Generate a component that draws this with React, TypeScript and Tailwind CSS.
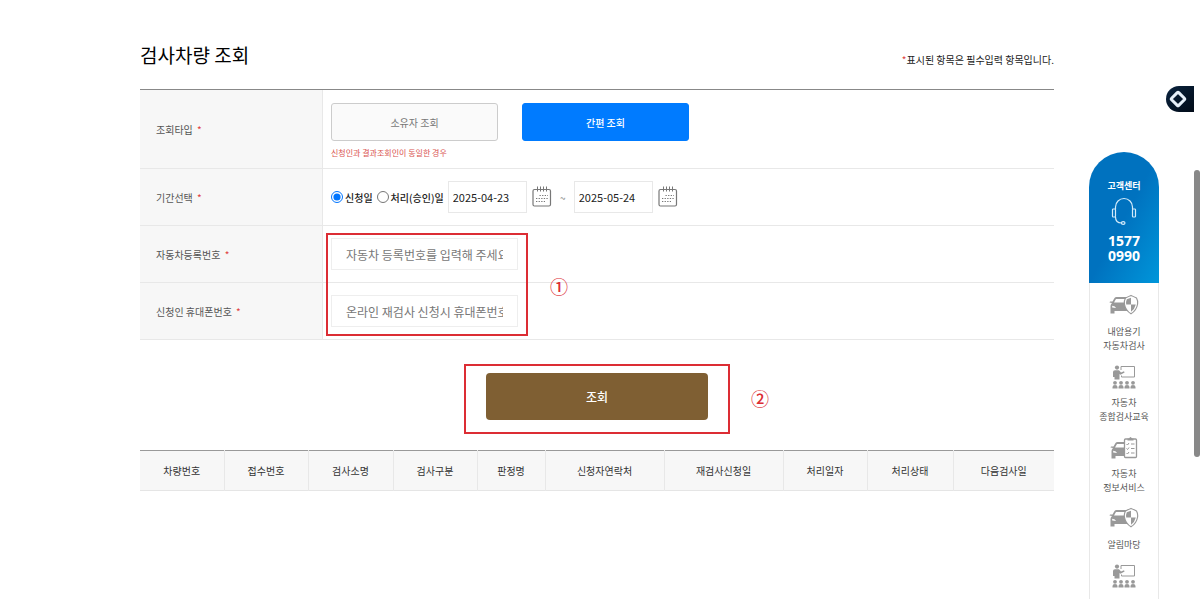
import { useState } from 'react'
import type { ReactNode } from 'react'

const columns = [
  { label: '차량번호', width: 'w-[84px]' },
  { label: '접수번호', width: 'w-[84px]' },
  { label: '검사소명', width: 'w-[85px]' },
  { label: '검사구분', width: 'w-[84px]' },
  { label: '판정명', width: 'w-[68px]' },
  { label: '신청자연락처', width: 'w-[119px]' },
  { label: '재검사신청일', width: 'w-[119px]' },
  { label: '처리일자', width: 'w-[84px]' },
  { label: '처리상태', width: 'w-[86px]' },
  { label: '다음검사일', width: 'w-[101px]' },
]

function CalendarIcon() {
  return (
    <svg width="20" height="22" viewBox="0 0 20 22" fill="none" stroke="#777">
      <rect x="1" y="3.5" width="17.5" height="16.5" rx="1.5" strokeWidth="1.2" />
      <path d="M5.500 0.500v5M8.500 0.500v5M11.500 0.500v5M14.500 0.500v5" />
      <path
        d="M7.500 9.500h8.500M4 12.500h12M4 15.500h9"
        strokeWidth="1.2"
        strokeDasharray="1.3 1.3"
      />
    </svg>
  )
}

function HeadsetIcon() {
  return (
    <svg width="26" height="28" viewBox="0 0 26 28" fill="none" stroke="#d3ebfa" strokeWidth="1.2">
      <path d="M4.5 12V10a8.500 8.500 0 0 1 17 0V12" />
      <rect x="1.500" y="12" width="3" height="8" rx="0.800" />
      <rect x="21.500" y="12" width="3" height="8" rx="0.800" />
      <path d="M4.500 20c0 4 2.500 6 6 6" />
      <ellipse cx="12.200" cy="26" rx="1.800" ry="1.300" />
    </svg>
  )
}

function CarShape() {
  return (
    <path
      fillRule="evenodd"
      d="M0.500 8.500L1 7.500H3.500L5.500 4Q6.200 3 7.500 3H18V17H5.500V19.500H1.500V12Q1.500 10.500 3 9ZM7 5L5 8.500H18V5ZM3.200 11.800V13.500L7 14Q6.500 12 3.200 11.800Z"
    />
  )
}

function CarShieldIcon() {
  return (
    <svg width="30" height="24" viewBox="0 0 30 24" fill="#999">
      <CarShape />
      <path
        d="M22 1.500Q24.500 2.500 27.500 4Q29 6.500 28.600 10Q27.500 16.500 22 19.800Q16.500 16.500 15.400 10Q15 6.500 16.500 4Q19.500 2.500 22 1.500Z"
        fill="#fff"
        stroke="#999"
        strokeWidth="1.200"
      />
      <path d="M22 3.800V10.500H17.200Q16.800 7.500 17.800 5.300Q20 4.300 22 3.800ZM22 10.500H26.800Q25.800 15 22 17.800Z" />
    </svg>
  )
}

function LectureIcon() {
  return (
    <svg width="24" height="24" viewBox="0 0 24 24" fill="#999">
      <circle cx="5" cy="2.600" r="2.100" />
      <path d="M1 7Q1 5.200 3 5.200H7L9 7.500 12 6.200 12.600 7.500 8.500 9.800 7.500 9V14.500H2.500V12H1Z" />
      <path d="M9 5V1.500H22.500V12H9.500V10.500" fill="none" stroke="#999" />
      {[3, 9, 15, 21].map((x) => (
        <g key={x}>
          <circle cx={x} cy="17.800" r="1.900" />
          <path d={`M${x - 2.5} 23.500v-1.500q0-2 2.500-2t2.500 2v1.500z`} />
        </g>
      ))}
    </svg>
  )
}

function CarChecklistIcon() {
  return (
    <svg width="28" height="24" viewBox="0 0 28 24" fill="#999">
      <g transform="translate(0 3)">
        <CarShape />
      </g>
      <rect x="14.500" y="3" width="12" height="18.500" rx="1" fill="#fff" stroke="#999" strokeWidth="1.300" />
      <path d="M17.500 4.500V2.500H19Q20.500 -0.500 22 2.500H23.500V4.500Z" />
      <path
        d="M16.500 8l1 1 1.500-2M16.500 12.500l1 1 1.500-2M16.500 17l1 1 1.500-2M21 8h3.500M21 12.500h3.500M21 17h3.500"
        fill="none"
        stroke="#999"
      />
    </svg>
  )
}

const quickLinks = [
  { icon: <CarShieldIcon />, lines: ['내압용기', '자동차검사'] },
  { icon: <LectureIcon />, lines: ['자동차', '종합검사교육'] },
  { icon: <CarChecklistIcon />, lines: ['자동차', '정보서비스'] },
  { icon: <CarShieldIcon />, lines: ['알림마당'] },
  { icon: <LectureIcon />, lines: [] },
]

function Row({
  label,
  htmlFor,
  className,
  children,
}: {
  label: string
  htmlFor?: string
  className: string
  children: ReactNode
}) {
  return (
    <div className={`flex border-b border-[#e8e8e8] ${className}`}>
      <div className="flex w-[183px] items-center border-r border-[#e8e8e8] bg-[#f7f7f7] pl-4 text-[10px] text-[#555]">
        <label htmlFor={htmlFor}>
          {label} <span className="ml-0.5 text-[#e04040]">*</span>
        </label>
      </div>
      <div className="flex flex-1 flex-col justify-center pl-2">{children}</div>
    </div>
  )
}

function SideMenu() {
  return (
    <aside className="mt-[152px] flex w-[70px] shrink-0 flex-col">
      <div className="flex h-[131px] flex-col items-center rounded-t-full bg-linear-to-br from-[#0072bf] from-50% to-[#0096da] pt-[27px] font-bold text-white">
        <p className="text-[9px] leading-[14px]">고객센터</p>
        <div className="mt-1">
          <HeadsetIcon />
        </div>
        <p className="mt-2 text-center font-['Noto_Sans',sans-serif] text-[14px] leading-[15px]">
          <span className="block">1577</span>
          <span className="block">0990</span>
        </p>
      </div>
      <nav className="flex flex-1 flex-col gap-3 border-x border-[#e8e8e8] bg-white pt-[11px]">
        {quickLinks.map((item, index) => (
          <a
            key={index}
            href="#"
            className="flex flex-col items-center gap-[7px] text-center text-[9px] leading-[14px] text-[#555]"
          >
            {item.icon}
            {item.lines.length > 0 && (
              <span>
                {item.lines.map((line) => (
                  <span key={line} className="block">
                    {line}
                  </span>
                ))}
              </span>
            )}
          </a>
        ))}
      </nav>
    </aside>
  )
}

export default function App() {
  const [searchType, setSearchType] = useState('simple')
  const [dateType, setDateType] = useState('apply')

  const typeButton = 'h-[38px] w-[167px] rounded-[3px] border text-[10px]'
  const typeOn = 'border-[#007bff] bg-[#007bff] font-medium text-white'
  const typeOff = 'border-[#ccc] bg-[#fafafa] text-[#777]'
  const dateInput = 'h-8 w-[79px] border border-[#e8e8e8] px-1 text-[11px] text-[#222]'
  const textInput =
    'h-8 w-[187px] border border-[#eee] px-[14px] text-[12px] placeholder:text-[#777]'

  return (
    <div className="flex h-screen overflow-hidden bg-white pr-[41px] font-['Noto_Sans_CJK_KR',sans-serif] text-[#222]">
      <main className="mr-[35px] ml-[140px] flex-1 pt-10">
        <div className="mb-[19px] flex items-end justify-between">
          <h1 className="text-[19px] leading-[30px] text-black">검사차량 조회</h1>
          <p className="text-[10px] leading-5">
            <span className="text-[#e04040]">*</span>표시된 항목은 필수입력 항목입니다.
          </p>
        </div>

        <form onSubmit={(e) => e.preventDefault()}>
          <div className="border-t border-[#888]">
            <Row label="조회타입" className="h-[79px]">
              <div className="flex gap-6 pt-1.5">
                <button
                  type="button"
                  className={`${typeButton} ${searchType === 'owner' ? typeOn : typeOff}`}
                  onClick={() => setSearchType('owner')}
                >
                  소유자 조회
                </button>
                <button
                  type="button"
                  className={`${typeButton} ${searchType === 'simple' ? typeOn : typeOff}`}
                  onClick={() => setSearchType('simple')}
                >
                  간편 조회
                </button>
              </div>
              <p className="mt-1 text-[8px] leading-4 text-[#d9534f]">
                신청인과 결과조회인이 동일한 경우
              </p>
            </Row>

            <Row label="기간선택" className="h-[57px]">
              <div className="flex items-center text-[10px]">
                <label className="mr-1 flex items-center gap-0.5 font-medium">
                  <input
                    type="radio"
                    name="dateType"
                    className="size-3"
                    checked={dateType === 'apply'}
                    onChange={() => setDateType('apply')}
                  />
                  신청일
                </label>
                <label className="mr-1 flex items-center gap-0.5 font-medium">
                  <input
                    type="radio"
                    name="dateType"
                    className="size-3"
                    checked={dateType === 'approve'}
                    onChange={() => setDateType('approve')}
                  />
                  처리(승인)일
                </label>
                <input aria-label="시작일" className={dateInput} defaultValue="2025-04-23" />
                <button type="button" aria-label="시작일 달력" className="ml-[5px]">
                  <CalendarIcon />
                </button>
                <span className="w-[22px] text-center text-[#888]">~</span>
                <input aria-label="종료일" className={dateInput} defaultValue="2025-05-24" />
                <button type="button" aria-label="종료일 달력" className="ml-[5px]">
                  <CalendarIcon />
                </button>
              </div>
            </Row>

            <div className="relative">
              <Row label="자동차등록번호" htmlFor="carNo" className="h-[57px]">
                <input
                  id="carNo"
                  className={textInput}
                  placeholder="자동차 등록번호를 입력해 주세요"
                />
              </Row>
              <Row label="신청인 휴대폰번호" htmlFor="phone" className="h-[57px]">
                <input
                  id="phone"
                  className={textInput}
                  placeholder="온라인 재검사 신청시 휴대폰번호를 입력해 주세요"
                />
              </Row>
              {/* step 1 marker */}
              <div className="pointer-events-none absolute top-[7px] left-[186px] h-[103px] w-[202px] border-2 border-[#dc2d34]" />
              <span className="absolute top-12 left-[410px] text-[18px] leading-6 font-medium text-[#dc2d34]">
                ①
              </span>
            </div>
          </div>

          <div className="flex justify-center pt-6 pb-4">
            {/* step 2 marker */}
            <div className="relative border-2 border-[#dc2d34] px-5 pt-[7px] pb-[12px]">
              <button
                type="submit"
                className="block h-[47px] w-[222px] rounded-[4px] bg-[#7f5f33] text-[12px] font-medium text-white"
              >
                조회
              </button>
              <span className="absolute top-5 left-full ml-[23px] text-[18px] leading-6 font-medium text-[#dc2d34]">
                ②
              </span>
            </div>
          </div>
        </form>

        <table className="w-full table-fixed border-t border-b border-t-[#999] border-b-[#e5e5e5] bg-[#f7f7f7]">
          <thead>
            <tr>
              {columns.map((col) => (
                <th
                  key={col.label}
                  scope="col"
                  className={`h-10 border-r border-[#e8e8e8] text-[10px] font-normal text-[#333] last:border-r-0 ${col.width}`}
                >
                  {col.label}
                </th>
              ))}
            </tr>
          </thead>
        </table>
      </main>

      <SideMenu />

      <button
        type="button"
        aria-label="바로가기"
        className="fixed top-[86px] right-[6px] flex h-[26px] w-7 items-center rounded-l-full bg-linear-to-br from-[#0b2440] to-[#020b18] pl-[3px]"
      >
        <svg width="18" height="18" viewBox="0 0 18 18" fill="none">
          <rect
            x="4"
            y="4"
            width="10"
            height="10"
            rx="1"
            transform="rotate(45 9 9)"
            stroke="#e6f0fa"
            strokeWidth="3"
          />
        </svg>
      </button>
      <div className="fixed top-[170px] right-0 h-[287px] w-[6px] rounded-full bg-[#888]" />
    </div>
  )
}
